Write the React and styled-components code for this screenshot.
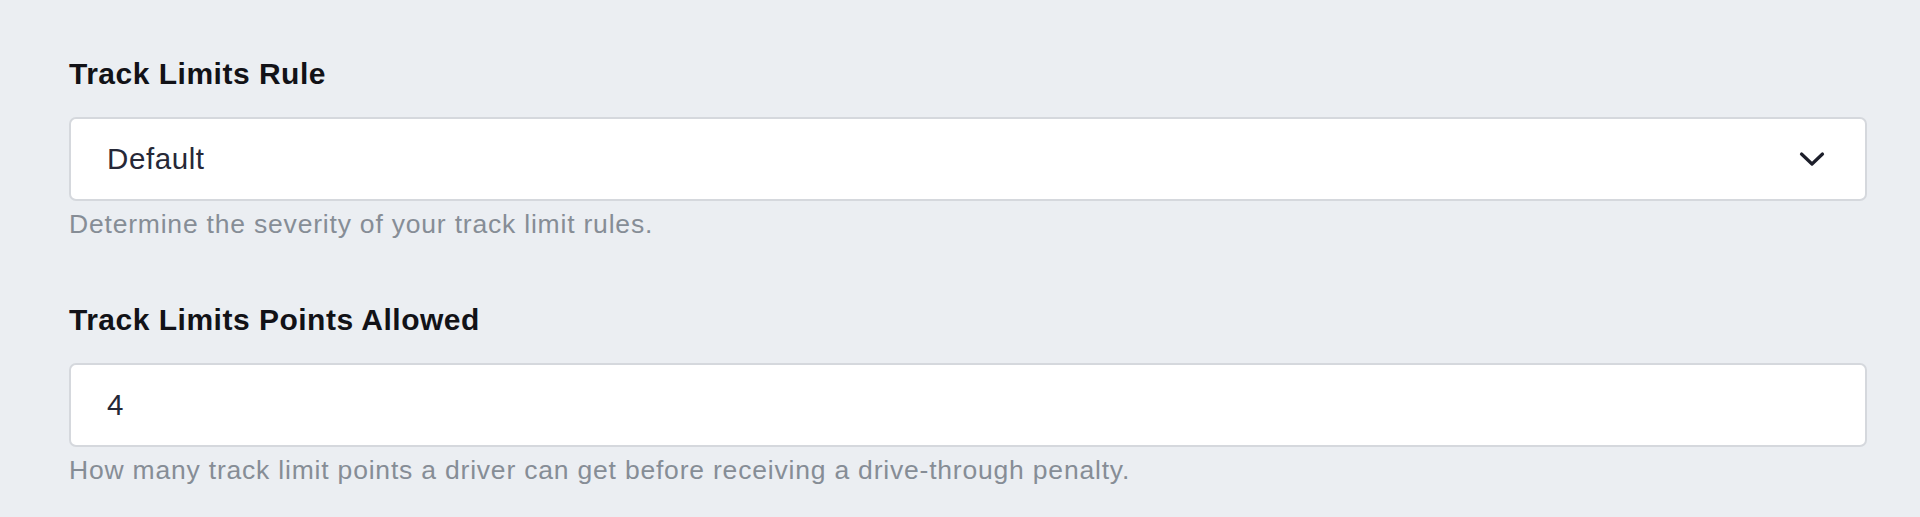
import React from "react";
import styled, { createGlobalStyle } from "styled-components";

const Global = createGlobalStyle`
  html, body { margin: 0; padding: 0; background: #ebeef2; }
  body { font-family: "Liberation Sans", Arial, sans-serif; }
  * { box-sizing: border-box; }
`;

const Page = styled.div`
  padding: 54px 53px 0 69px;
  display: flex;
  flex-direction: column;
  gap: 58px;
`;

const Field = styled.div`
  display: flex;
  flex-direction: column;
`;

const Label = styled.label`
  font-size: 30px;
  line-height: 40px;
  font-weight: 700;
  color: #121217;
  letter-spacing: 0.5px;
  margin-bottom: 23px;
`;

const Box = styled.div`
  height: 84px;
  background: #ffffff;
  border: 2px solid #d5d8dd;
  border-radius: 7px;
  display: flex;
  align-items: center;
  padding: 0 36px;
`;

const Value = styled.span`
  flex: 1;
  font-size: 29.5px;
  letter-spacing: 0.6px;
  color: #262837;
`;

const Chevron = styled.svg`
  width: 26px;
  height: 16px;
  margin-right: 4px;
`;

const Help = styled.p`
  margin: 5px 0 0;
  font-size: 26.5px;
  line-height: 36px;
  letter-spacing: 0.8px;
  color: #868d96;
`;

export default function App() {
  return (
    <>
      <Global />
      <Page>
        <Field>
          <Label>Track Limits Rule</Label>
          <Box>
            <Value>Default</Value>
            <Chevron viewBox="0 0 26 16" fill="none">
              <polyline
                points="2.5,3 13,13 23.5,3"
                stroke="#1d1f2b"
                strokeWidth="3.2"
                strokeLinecap="round"
                strokeLinejoin="round"
              />
            </Chevron>
          </Box>
          <Help>Determine the severity of your track limit rules.</Help>
        </Field>
        <Field>
          <Label>Track Limits Points Allowed</Label>
          <Box>
            <Value>4</Value>
          </Box>
          <Help>
            How many track limit points a driver can get before receiving a
            drive-through penalty.
          </Help>
        </Field>
      </Page>
    </>
  );
}
